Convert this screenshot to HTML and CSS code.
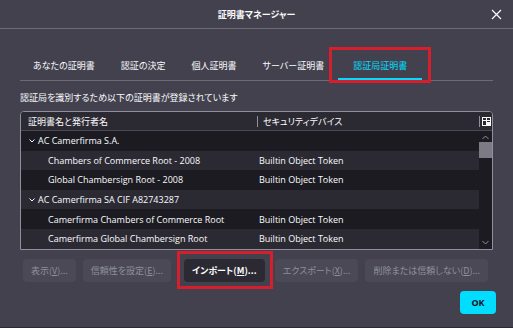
FILE: index.html
```html
<!DOCTYPE html>
<html lang="ja">
<head>
  <meta charset="UTF-8">
  <title>証明書マネージャー</title>
  <link rel="stylesheet" href="styles.css">
</head>
<body>

  <div class="dialog">
    <div class="title-bar">
      <h1>証明書マネージャー</h1>
      <button class="close-btn" aria-label="閉じる">
        <svg width="11" height="11" viewBox="0 0 11 11"><path d="M1 1L10 10M10 1L1 10" stroke="#fbfbfe" stroke-width="1.2"/></svg>
      </button>
    </div>

    <div class="content">
      <div class="tabs">
        <div class="tab">あなたの証明書</div>
        <div class="tab">認証の決定</div>
        <div class="tab">個人証明書</div>
        <div class="tab">サーバー証明書</div>
        <div class="tab selected marked">認証局証明書</div>
      </div>

      <p class="desc">認証局を識別するため以下の証明書が登録されています</p>

      <div class="tree">
        <div class="tree-head">
          <div class="col-name">証明書名と発行者名</div>
          <div class="col-device">セキュリティデバイス</div>
          <div class="col-picker">
            <svg width="9" height="9" viewBox="0 0 9 9"><rect x="0.5" y="0.5" width="8" height="8" fill="none" stroke="#fbfbfe"/><path d="M0.5 3.5H8.5M4.5 0.5V8.5" stroke="#fbfbfe"/><rect x="5" y="5" width="4" height="4" fill="#fbfbfe"/></svg>
          </div>
        </div>
        <div class="tree-body">
          <div class="rows" id="rows"></div>
          <div class="scrollbar">
            <svg class="arrow" width="7" height="5" viewBox="0 0 7 5"><path d="M0.5 4L3.5 1L6.5 4" fill="none" stroke="#8f8f9d"/></svg>
            <div class="thumb"></div>
            <div class="track"></div>
            <svg class="arrow" width="7" height="5" viewBox="0 0 7 5"><path d="M0.5 1L3.5 4L6.5 1" fill="none" stroke="#8f8f9d"/></svg>
          </div>
        </div>
      </div>

      <div class="actions">
        <button class="btn" disabled>表示(<u>V</u>)...</button>
        <button class="btn" disabled>信頼性を設定(<u>E</u>)...</button>
        <button class="btn active marked">インポート(<u>M</u>)...</button>
        <button class="btn" disabled>エクスポート(<u>X</u>)...</button>
        <button class="btn" disabled>削除または信頼しない(<u>D</u>)...</button>
      </div>

      <div class="footer">
        <button class="ok-btn">OK</button>
      </div>
    </div>
  </div>

  <script>
    const certs = [
      { name: "AC Camerfirma S.A.", group: true },
      { name: "Chambers of Commerce Root - 2008", device: "Builtin Object Token" },
      { name: "Global Chambersign Root - 2008", device: "Builtin Object Token" },
      { name: "AC Camerfirma SA CIF A82743287", group: true },
      { name: "Camerfirma Chambers of Commerce Root", device: "Builtin Object Token" },
      { name: "Camerfirma Global Chambersign Root", device: "Builtin Object Token" }
    ];

    const rowsEl = document.getElementById("rows");
    certs.forEach(cert => {
      const row = document.createElement("div");
      row.className = cert.group ? "row group" : "row";
      row.innerHTML = cert.group
        ? `<div class="col-name"><svg class="twisty" width="6" height="4" viewBox="0 0 6 4"><path d="M0.5 0.5L3 3L5.5 0.5" fill="none" stroke="#fbfbfe"/></svg>${cert.name}</div><div class="col-device"></div>`
        : `<div class="col-name">${cert.name}</div><div class="col-device">${cert.device}</div>`;
      rowsEl.appendChild(row);
    });
  </script>

</body>
</html>
```

FILE: styles.css
```css
* {
  box-sizing: border-box;
}

body {
  margin: 0;
  background: #2b2a33;
  font-family: "Open Sans", "Noto Sans CJK JP", sans-serif;
  color: #fbfbfe;
}

.dialog {
  width: 513px;
  height: 327px;
  background: #42414d;
  display: flex;
  flex-direction: column;
}

.title-bar {
  height: 29px;
  border-bottom: 1px solid #6b6a75;
  display: flex;
  align-items: center;
  justify-content: center;
  position: relative;
}

.title-bar h1 {
  margin: 0;
  font-size: 9px;
  font-weight: bold;
  font-family: "Noto Sans CJK JP", sans-serif;
  font-feature-settings: "palt";
}

.close-btn {
  position: absolute;
  right: 11px;
  top: 9px;
  background: none;
  border: none;
  padding: 0;
  display: flex;
}

.content {
  padding: 0 20px;
  flex: 1;
  display: flex;
  flex-direction: column;
}

.tabs {
  margin-top: 27px;
  display: flex;
  border-bottom: 1px solid #6b6a75;
}

.tab {
  font-family: "Noto Sans CJK JP", sans-serif;
  font-feature-settings: "palt";
  font-size: 9px;
  line-height: 12px;
  padding: 4px 13px 6px;
  border-bottom: 2px solid transparent;
  white-space: nowrap;
}

.tab.selected {
  color: #00ddff;
  border-bottom-color: #00ddff;
  padding: 4px 15px 6px;
  margin-left: 1px;
}

.marked {
  position: relative;
}

.marked::after {
  content: "";
  position: absolute;
  top: -8px;
  left: -7px;
  right: -8px;
  bottom: -7px;
  border: 3px solid #d61f2c;
  pointer-events: none;
}

.tab.marked::after {
  top: -9px;
  left: -9px;
  right: -9px;
  bottom: -5px;
}

.desc {
  margin: 11px 0 7px;
  font-family: "Noto Sans CJK JP", sans-serif;
  font-feature-settings: "palt";
  font-size: 9px;
  line-height: 12px;
}

.tree {
  border: 1px solid #8f8f9d;
  border-radius: 4px 4px 0 0;
  background: #1c1b22;
  overflow: hidden;
}

.tree-head {
  display: flex;
  align-items: center;
  height: 19px;
  background: #2b2a33;
  border-bottom: 1px solid #4a4955;
  font-family: "Noto Sans CJK JP", sans-serif;
  font-feature-settings: "palt";
  font-size: 9px;
}

.tree-head .col-name {
  width: 237px;
  padding-left: 7px;
  border-right: 1px solid #8f8f9d;
  line-height: 11px;
}

.tree-head .col-device {
  flex: 1;
  padding-left: 5px;
}

.col-picker {
  width: 13px;
  display: flex;
  justify-content: center;
  border-left: 1px solid #8f8f9d;
  padding: 1px 0;
}

.tree-body {
  display: flex;
}

.rows {
  flex: 1;
}

.row {
  display: flex;
  align-items: center;
  height: 19.6px;
  font-size: 9px;
}

.row:nth-child(even) {
  background: #2b2a33;
}

.row .col-name {
  width: 237px;
  padding-left: 27px;
}

.row.group .col-name {
  padding-left: 8px;
}

.twisty {
  margin-right: 3px;
  vertical-align: 1px;
}

.row .col-device {
  flex: 1;
  padding-left: 1px;
}

.scrollbar {
  width: 13px;
  display: flex;
  flex-direction: column;
  align-items: center;
  background: #1c1b22;
  padding: 4px 0;
}

.scrollbar .arrow {
  flex: none;
}

.thumb {
  width: 13px;
  height: 16px;
  margin-top: 2px;
  background: #7c7b85;
}

.track {
  flex: 1;
}

.actions {
  display: flex;
  gap: 7px;
  margin-top: 9px;
  padding-left: 3px;
}

.btn {
  font-family: "Noto Sans CJK JP", sans-serif;
  font-feature-settings: "palt";
  font-size: 9px;
  height: 23px;
  padding: 0 8px;
  border: none;
  border-radius: 4px;
  background: #4a4955;
  color: #8f8f9d;
  white-space: nowrap;
}

.btn.active {
  background: #2b2a33;
  color: #fbfbfe;
  font-weight: bold;
  margin: 0 3px 0 6px;
}

.footer {
  display: flex;
  justify-content: flex-end;
  margin-top: 9px;
}

.ok-btn {
  width: 36px;
  height: 23px;
  margin-right: -3px;
  border: none;
  border-radius: 4px;
  background: #00ddff;
  color: #15141a;
  font-family: "Open Sans", sans-serif;
  font-weight: bold;
  font-size: 9px;
}
```
